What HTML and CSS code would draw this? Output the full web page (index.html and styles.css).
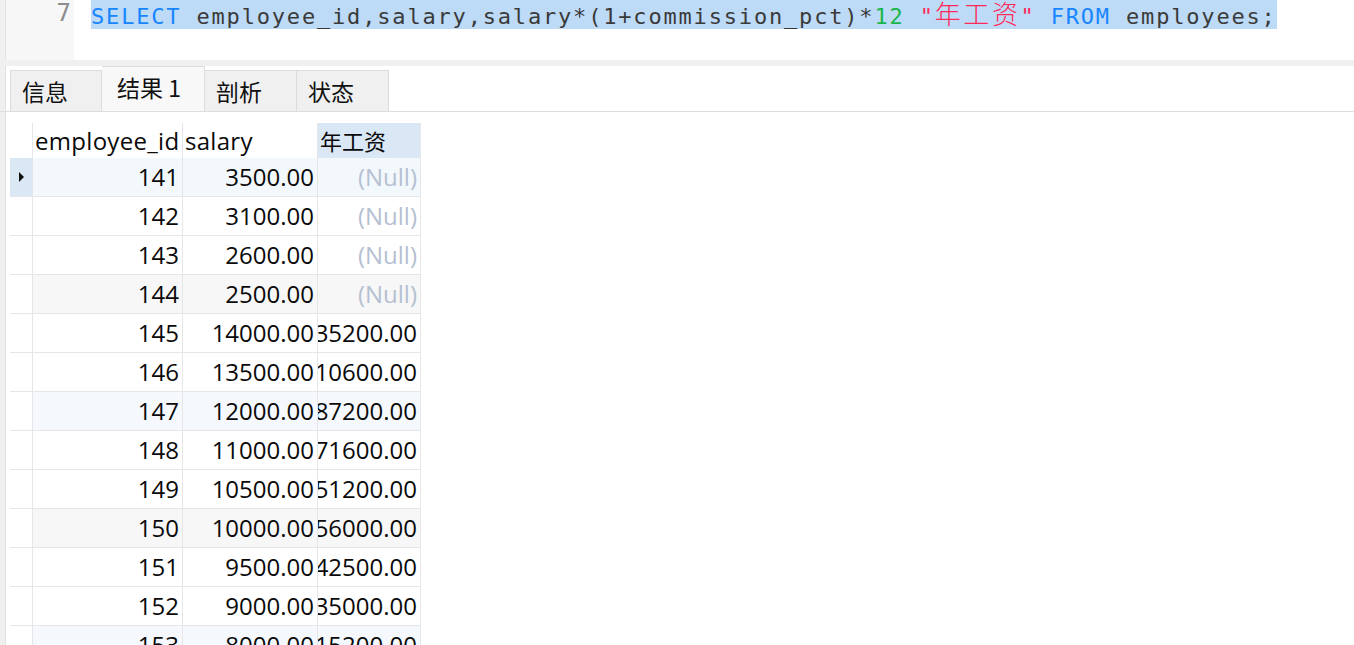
FILE: index.html
```html
<!DOCTYPE html>
<html lang="zh">
<head>
<meta charset="utf-8">
<title>Query</title>
<link rel="stylesheet" href="styles.css">
</head>
<body>
<div class="app">
  <div class="editor">
    <div class="edge"></div>
    <div class="gutter"><span class="lineno">7</span></div>
    <div class="code"><span class="sel"><span class="kw">SELECT</span> employee_id,salary,salary*(1+commission_pct)*<span class="num">12</span> <span class="str">"<span class="cjk">年工资</span>"</span> <span class="kw">FROM</span> employees;</span></div>
  </div>
  <div class="divider"></div>
  <div class="tabbar">
    <div class="edge"></div>
    <div class="tabs">
      <div class="tab">信息</div>
      <div class="tab active">结果 1</div>
      <div class="tab">剖析</div>
      <div class="tab">状态</div>
    </div>
  </div>
  <div class="results">
    <div class="edge"></div>
    <div class="grid">
      <div class="row head">
        <div class="ind"></div>
        <div class="cell c1">employee_id</div>
        <div class="cell c2">salary</div>
        <div class="cell c3 hl">年工资</div>
      </div>
      <div class="row selrow">
        <div class="ind cur"><span class="arrow"></span></div>
        <div class="cell c1 r">141</div><div class="cell c2 r">3500.00</div><div class="cell c3 r null">(Null)</div>
      </div>
      <div class="row">
        <div class="ind"></div>
        <div class="cell c1 r">142</div><div class="cell c2 r">3100.00</div><div class="cell c3 r null">(Null)</div>
      </div>
      <div class="row">
        <div class="ind"></div>
        <div class="cell c1 r">143</div><div class="cell c2 r">2600.00</div><div class="cell c3 r null">(Null)</div>
      </div>
      <div class="row gray">
        <div class="ind"></div>
        <div class="cell c1 r">144</div><div class="cell c2 r">2500.00</div><div class="cell c3 r null">(Null)</div>
      </div>
      <div class="row">
        <div class="ind"></div>
        <div class="cell c1 r">145</div><div class="cell c2 r">14000.00</div><div class="cell c3 r">235200.00</div>
      </div>
      <div class="row">
        <div class="ind"></div>
        <div class="cell c1 r">146</div><div class="cell c2 r">13500.00</div><div class="cell c3 r">210600.00</div>
      </div>
      <div class="row blue">
        <div class="ind"></div>
        <div class="cell c1 r">147</div><div class="cell c2 r">12000.00</div><div class="cell c3 r">187200.00</div>
      </div>
      <div class="row">
        <div class="ind"></div>
        <div class="cell c1 r">148</div><div class="cell c2 r">11000.00</div><div class="cell c3 r">171600.00</div>
      </div>
      <div class="row">
        <div class="ind"></div>
        <div class="cell c1 r">149</div><div class="cell c2 r">10500.00</div><div class="cell c3 r">151200.00</div>
      </div>
      <div class="row gray">
        <div class="ind"></div>
        <div class="cell c1 r">150</div><div class="cell c2 r">10000.00</div><div class="cell c3 r">156000.00</div>
      </div>
      <div class="row">
        <div class="ind"></div>
        <div class="cell c1 r">151</div><div class="cell c2 r">9500.00</div><div class="cell c3 r">142500.00</div>
      </div>
      <div class="row">
        <div class="ind"></div>
        <div class="cell c1 r">152</div><div class="cell c2 r">9000.00</div><div class="cell c3 r">135000.00</div>
      </div>
      <div class="row blue">
        <div class="ind"></div>
        <div class="cell c1 r">153</div><div class="cell c2 r">8000.00</div><div class="cell c3 r">115200.00</div>
      </div>
    </div>
  </div>
</div>
</body>
</html>
```

FILE: styles.css
```css
* { box-sizing: border-box; }
html, body { margin: 0; padding: 0; background: #ffffff; }
.app {
  width: 1354px;
  height: 645px;
  overflow: hidden;
  display: flex;
  flex-direction: column;
  font-family: "Open Sans", "Noto Sans CJK SC", sans-serif;
}
.edge {
  width: 6px;
  flex: 0 0 6px;
  background: #f0f0f0;
  border-right: 1px solid #e2e2e2;
}

/* editor */
.editor {
  height: 60px;
  flex: 0 0 60px;
  display: flex;
}
.gutter {
  width: 68px;
  flex: 0 0 68px;
  background: #f7f7f7;
  display: flex;
  justify-content: flex-end;
  padding-right: 3px;
}
.lineno {
  font-family: "DejaVu Sans Mono", monospace;
  font-size: 24px;
  color: #8c8c8c;
  line-height: 27px;
}
.code {
  padding-left: 17px;
  font-family: "DejaVu Sans Mono", monospace;
  font-size: 22px;
  letter-spacing: 1.82px;
  color: #3a3a3a;
  white-space: pre;
}
.sel {
  display: inline-block;
  background: #bddaf7;
  height: 29px;
  line-height: 26px;
}
.kw { color: #1785ff; }
.num { color: #17b64a; }
.str { color: #ff2a5a; }
.cjk {
  font-family: "Noto Sans CJK SC", sans-serif;
  font-size: 26px;
  letter-spacing: 2.6px;
  font-weight: 300;
  line-height: 26px;
}

.divider {
  height: 6px;
  flex: 0 0 6px;
  background: #f0f0f0;
}

/* tabs */
.tabbar {
  height: 46px;
  flex: 0 0 46px;
  display: flex;
  border-bottom: 1px solid #dddddd;
}
.tabs {
  display: flex;
  align-items: flex-end;
  padding-left: 4px;
}
.tab {
  height: 41px;
  width: 92px;
  background: #f0f0f0;
  border: 1px solid #dcdcdc;
  border-bottom: none;
  border-left: none;
  font-family: "Noto Sans CJK SC", sans-serif;
  font-size: 23px;
  color: #111;
  padding-left: 11px;
  line-height: 41px;
}
.tab:first-child { border-left: 1px solid #dcdcdc; }
.tab.active {
  height: 45px;
  width: 103px;
  background: #f8f8f8;
  padding-left: 15px;
  line-height: 40px;
}

/* results grid */
.results {
  flex: 1;
  display: flex;
  padding-top: 11px;
}
.results .edge { margin-top: -11px; }
.grid {
  margin-left: 4px;
  display: flex;
  flex-direction: column;
}
.row {
  display: flex;
  height: 39px;
  border-bottom: 1px solid #e6e6e6;
  font-size: 24px;
  color: #0a0a0a;
}
.row.head {
  height: 35px;
  border-bottom: none;
}
.ind {
  width: 23px;
  border-right: 1px solid #e6e6e6;
  display: flex;
  align-items: center;
  justify-content: center;
}
.head .ind { background: #ffffff; }
.ind.cur { background: #dae7f5; }
.arrow {
  width: 0;
  height: 0;
  border-top: 5px solid transparent;
  border-bottom: 5px solid transparent;
  border-left: 5px solid #111;
}
.cell {
  display: flex;
  align-items: center;
  overflow: hidden;
  white-space: nowrap;
  border-right: 1px solid #e6e6e6;
  padding: 0 3px 2px 2px;
}
.cell.r { justify-content: flex-end; }
.c1 { width: 150px; }
.c2 { width: 135px; }
.c3 { width: 103px; }
.head .cell { letter-spacing: 0.3px; padding-bottom: 1px; }
.head .c3 { font-family: "Noto Sans CJK SC", sans-serif; font-size: 22px; letter-spacing: 0; }
.hl { background: #dae7f5; }
.null { color: #b5c0d2; }
.selrow .cell { background: #f3f8fd; }
.gray .cell { background: #f7f7f7; }
.blue .cell { background: #f5f9fd; }
```
